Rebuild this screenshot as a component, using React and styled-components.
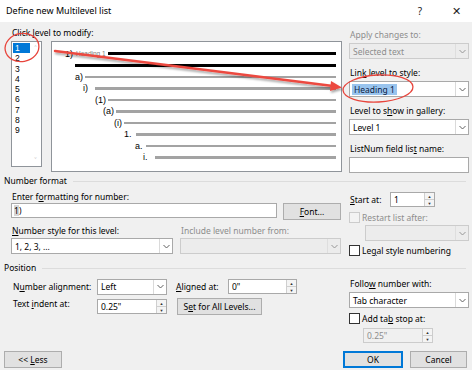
import styled, { createGlobalStyle } from "styled-components";

const GlobalStyle = createGlobalStyle`
    html, body {
        margin: 0;
        padding: 0;
        background: #f0f0f0;
    }
    body {
        font-family: "Noto Sans", "Open Sans", sans-serif;
        font-size: 8.5px;
        color: #000;
    }
`;

const levels = ["1", "2", "3", "4", "5", "6", "7", "8", "9"];

const previewRows = [
    { label: "a)", indent: 23, gap: 2 },
    { label: "i)", indent: 31, gap: 7 },
    { label: "(1)", indent: 43, gap: 2 },
    { label: "(a)", indent: 51, gap: 2 },
    { label: "(i)", indent: 62, gap: 2 },
    { label: "1.", indent: 72, gap: 4 },
    { label: "a.", indent: 83, gap: 3 },
    { label: "i.", indent: 91, gap: 7 },
];

const Chevron = () => (
    <svg width="7" height="5" viewBox="0 0 7 5">
        <path d="M0.5 1 L3.5 4 L6.5 1" fill="none" stroke="#606060" strokeWidth="1" />
    </svg>
);

const Select = ({ value, width, disabled, highlight }) => (
    <SelectBox $width={width} $disabled={disabled}>
        <SelectValue>{highlight ? <Highlight>{value}</Highlight> : value}</SelectValue>
        <SelectArrow $disabled={disabled}><Chevron /></SelectArrow>
    </SelectBox>
);

const Spin = ({ value, width, disabled }) => (
    <SpinBox $width={width} $disabled={disabled}>
        <SelectValue>{value}</SelectValue>
        <SpinButtons>
            <SpinHalf>▲</SpinHalf>
            <SpinHalf>▼</SpinHalf>
        </SpinButtons>
    </SpinBox>
);

const Check = ({ children, disabled }) => (
    <CheckRow $disabled={disabled}>
        <CheckBox $disabled={disabled} />
        <span>{children}</span>
    </CheckRow>
);

const Annotations = () => (
    <Overlay width="472" height="370" viewBox="0 0 472 370">
        <defs>
            <filter id="shadow" x="-10%" y="-50%" width="120%" height="200%">
                <feDropShadow dx="1" dy="2" stdDeviation="1.2" floodColor="#000" floodOpacity="0.35" />
            </filter>
        </defs>
        <g filter="url(#shadow)">
            <line x1="55" y1="51" x2="333" y2="86" stroke="#ec4a41" strokeWidth="2.5" strokeLinecap="round" />
            <polygon points="342,87.5 331,81 330,91" fill="#ec4a41" />
        </g>
        <ellipse cx="22" cy="47.5" rx="17" ry="14" fill="none" stroke="#e8453c" strokeWidth="1.3" transform="rotate(-10 22 47.5)" />
        <ellipse cx="378" cy="88.5" rx="35" ry="13.5" fill="none" stroke="#e8453c" strokeWidth="1.3" transform="rotate(-3 378 88.5)" />
    </Overlay>
);

export default function App() {
    return (
        <>
            <GlobalStyle />
            <Dialog>
                <TitleBar>
                    <Title>Define new Multilevel list</Title>
                    <TitleButtons>
                        <TitleButton>?</TitleButton>
                        <TitleButton $close>✕</TitleButton>
                    </TitleButtons>
                </TitleBar>

                <Body>
                    <TwoColumns>
                        <div>
                            <TopLabel>Click <Key>l</Key>evel to modify:</TopLabel>
                            <LevelRow>
                                <ListBox>
                                    <ListItems>
                                        {levels.map((level, i) => (
                                            <ListItem key={level} $selected={i === 0}>{level}</ListItem>
                                        ))}
                                    </ListItems>
                                    <ScrollBar>
                                        <ScrollArrow>˄</ScrollArrow>
                                        <ScrollArrow>˅</ScrollArrow>
                                    </ScrollBar>
                                </ListBox>
                                <Preview>
                                    <PreviewRow $indent={13}>
                                        <PreviewLabel>1)</PreviewLabel>
                                        <HeadingText>Heading 1</HeadingText>
                                        <PreviewLine $dark />
                                    </PreviewRow>
                                    <PreviewRow $indent={23}>
                                        <PreviewLine $dark />
                                    </PreviewRow>
                                    {previewRows.map((row) => (
                                        <PreviewRow key={row.label} $indent={row.indent}>
                                            <PreviewLabel $gap={row.gap}>{row.label}</PreviewLabel>
                                            <PreviewLine />
                                        </PreviewRow>
                                    ))}
                                </Preview>
                            </LevelRow>
                        </div>

                        <SideColumn $top={7}>
                            <Field>
                                <FieldLabel $disabled>Apply changes to:</FieldLabel>
                                <Select value="Selected text" disabled />
                            </Field>
                            <Field>
                                <FieldLabel>Lin<Key>k</Key> level to style:</FieldLabel>
                                <Select value="Heading 1" highlight />
                            </Field>
                            <Field>
                                <FieldLabel>Level to s<Key>h</Key>ow in gallery:</FieldLabel>
                                <Select value="Level 1" />
                            </Field>
                            <Field>
                                <FieldLabel>ListNum field lis<Key>t</Key> name:</FieldLabel>
                                <TextBox />
                            </Field>
                        </SideColumn>
                    </TwoColumns>

                    <GroupHeader $top={2}>
                        <span>Number format</span>
                        <GroupRule />
                    </GroupHeader>

                    <TwoColumns>
                        <GroupContent>
                            <FieldLabel $top={4}>Enter f<Key>o</Key>rmatting for number:</FieldLabel>
                            <FormatRow>
                                <TextBox $width={266}><Cursor>1</Cursor>)</TextBox>
                                <Button $width={58}><Key>F</Key>ont...</Button>
                            </FormatRow>
                            <StyleGrid>
                                <FieldLabel><Key>N</Key>umber style for this level:</FieldLabel>
                                <FieldLabel $disabled>Include level number from:</FieldLabel>
                                <Select value="1, 2, 3, ..." />
                                <Select value="" disabled />
                            </StyleGrid>
                        </GroupContent>

                        <SideColumn $top={5}>
                            <InlineField>
                                <InlineLabel $width={40}><Key>S</Key>tart at:</InlineLabel>
                                <Spin value="1" width={45} />
                            </InlineField>
                            <Spaced $top={5}>
                                <Check disabled>Restart list after:</Check>
                            </Spaced>
                            <Indented $left={16} $top={2}>
                                <Select value="" disabled />
                            </Indented>
                            <Spaced $top={4}>
                                <Check>Le<Key>g</Key>al style numbering</Check>
                            </Spaced>
                        </SideColumn>
                    </TwoColumns>

                    <GroupHeader $top={6}>
                        <span>Position</span>
                        <GroupRule />
                    </GroupHeader>

                    <TwoColumns>
                        <PositionGrid>
                            <InlineLabel>N<Key>u</Key>mber alignment:</InlineLabel>
                            <Select value="Left" width={70} />
                            <InlineLabel $indent={9}><Key>A</Key>ligned at:</InlineLabel>
                            <Spin value={'0"'} width={69} />
                            <InlineLabel $raise>Text <Key>i</Key>ndent at:</InlineLabel>
                            <Spin value={'0.25"'} width={70} />
                            <SpanButton>S<Key>e</Key>t for All Levels...</SpanButton>
                        </PositionGrid>

                        <SideColumn $top={4}>
                            <Field>
                                <FieldLabel>Follo<Key>w</Key> number with:</FieldLabel>
                                <Select value="Tab character" />
                            </Field>
                            <Spaced $top={5}>
                                <Check>Add ta<Key>b</Key> stop at:</Check>
                            </Spaced>
                            <Indented $left={14} $top={4}>
                                <Spin value={'0.25"'} width={70} disabled />
                            </Indented>
                        </SideColumn>
                    </TwoColumns>

                    <Footer>
                        <Button $width={58}>{"<< "}<Key>L</Key>ess</Button>
                        <FooterRight>
                            <Button $width={60} $default>OK</Button>
                            <Button $width={57}>Cancel</Button>
                        </FooterRight>
                    </Footer>
                </Body>
                <Annotations />
            </Dialog>
        </>
    );
}

const Dialog = styled.div`
    position: relative;
    width: 472px;
    height: 370px;
    overflow: hidden;
    background: #f0f0f0;
    display: flex;
    flex-direction: column;
`;

const TitleBar = styled.div`
    height: 22px;
    background: #fff;
    display: flex;
    align-items: center;
    justify-content: space-between;
    padding-left: 6px;
`;

const Title = styled.div`
    font-size: 9px;
    line-height: 12px;
`;

const TitleButtons = styled.div`
    display: flex;
    align-items: center;
`;

const TitleButton = styled.div`
    width: ${(p) => (p.$close ? "32px" : "40px")};
    text-align: center;
    font-size: ${(p) => (p.$close ? "11px" : "10px")};
    line-height: 22px;
    color: #222;
`;

const Body = styled.div`
    flex: 1;
    padding: 0 3px 0 4px;
    display: flex;
    flex-direction: column;
`;

const TwoColumns = styled.div`
    display: grid;
    grid-template-columns: 338px 120px;
    column-gap: 7px;
    align-items: start;
`;

const Key = styled.span`
    text-decoration: underline;
    text-underline-offset: 1px;
`;

const TopLabel = styled.div`
    margin: 5px 0 0 8px;
    line-height: 12px;
`;

const LevelRow = styled.div`
    display: flex;
    gap: 9px;
    margin: 2px 0 0 7px;
`;

const ListBox = styled.div`
    width: 31px;
    height: 126px;
    box-sizing: border-box;
    background: #fff;
    border: 1px solid #8f949a;
    display: flex;
`;

const ListItems = styled.div`
    flex: 1;
    padding: 1px 0 0 1px;
`;

const ListItem = styled.div`
    height: 10.3px;
    line-height: 10.3px;
    padding-left: 2px;
    width: 15px;
    font-family: "Liberation Sans", Arial, sans-serif;
    font-size: 8.5px;
    background: ${(p) => (p.$selected ? "#0078d7" : "transparent")};
    color: ${(p) => (p.$selected ? "#fff" : "#000")};
`;

const ScrollBar = styled.div`
    width: 11px;
    display: flex;
    flex-direction: column;
    justify-content: space-between;
    align-items: center;
    padding: 3px 0 1px;
`;

const ScrollArrow = styled.span`
    color: #c4c4c4;
    font-size: 9px;
    line-height: 8px;
`;

const Preview = styled.div`
    width: 291px;
    height: 131px;
    box-sizing: border-box;
    background: #fff;
    border: 1px solid #8f949a;
    padding: 6px 5px 0 0;
`;

const PreviewRow = styled.div`
    display: flex;
    align-items: center;
    height: 11.5px;
    padding-left: ${(p) => p.$indent}px;
`;

const PreviewLabel = styled.span`
    font-family: "Liberation Sans", Arial, sans-serif;
    font-size: 9px;
    line-height: 10px;
    margin-right: ${(p) => p.$gap ?? 3}px;
`;

const HeadingText = styled.span`
    font-family: "Liberation Sans", Arial, sans-serif;
    font-size: 6.5px;
    color: #7a7a7a;
    margin-right: 2px;
`;

const PreviewLine = styled.div`
    flex: 1;
    height: ${(p) => (p.$dark ? "3px" : "2.5px")};
    background: ${(p) => (p.$dark ? "#000" : "#a3a3a3")};
`;

const SideColumn = styled.div`
    display: flex;
    flex-direction: column;
    padding-top: ${(p) => p.$top ?? 0}px;
`;

const Field = styled.div`
    display: flex;
    flex-direction: column;
    gap: 2px;
    & + & {
        margin-top: 8px;
    }
`;

const FieldLabel = styled.div`
    line-height: 12px;
    padding-left: 1px;
    margin-top: ${(p) => p.$top ?? 0}px;
    color: ${(p) => (p.$disabled ? "#8d8d8d" : "#000")};
    white-space: nowrap;
`;

const SelectBox = styled.div`
    width: ${(p) => (p.$width ? `${p.$width}px` : "100%")};
    height: 16px;
    box-sizing: border-box;
    display: flex;
    align-items: stretch;
    background: ${(p) => (p.$disabled ? "#ececec" : "#fff")};
    border: 1px solid ${(p) => (p.$disabled ? "#cccccc" : "#a9a9a9")};
    color: ${(p) => (p.$disabled ? "#8d8d8d" : "#000")};
`;

const SelectValue = styled.div`
    flex: 1;
    display: flex;
    align-items: center;
    padding-left: 3px;
    white-space: nowrap;
    overflow: hidden;
`;

const Highlight = styled.span`
    background: #99c4ee;
    color: #0d1b3e;
    padding: 0 2px;
    margin-left: -1px;
    line-height: 11px;
`;

const SelectArrow = styled.div`
    width: 12px;
    display: flex;
    align-items: center;
    justify-content: center;
    border-left: 1px solid ${(p) => (p.$disabled ? "#d6d6d6" : "#dadada")};
    background: ${(p) => (p.$disabled ? "#ececec" : "#fff")};
    opacity: ${(p) => (p.$disabled ? 0.6 : 1)};
`;

const TextBox = styled.div`
    width: ${(p) => (p.$width ? `${p.$width}px` : "100%")};
    height: ${(p) => (p.$width ? 15 : 16)}px;
    box-sizing: border-box;
    background: #fff;
    border: 1px solid #a9a9a9;
    padding-left: 2px;
    line-height: 13px;
`;

const Cursor = styled.span`
    background: #d6d6d6;
`;

const Button = styled.div`
    width: ${(p) => p.$width}px;
    height: 17px;
    box-sizing: border-box;
    display: flex;
    align-items: center;
    justify-content: center;
    background: #e1e1e1;
    border: 1px solid ${(p) => (p.$default ? "#0078d7" : "#adadad")};
    box-shadow: ${(p) => (p.$default ? "inset 0 0 0 1px #0078d7" : "none")};
    white-space: pre;
`;

const GroupContent = styled.div`
    padding-left: 7px;
`;

const FormatRow = styled.div`
    display: flex;
    align-items: flex-start;
    gap: 6px;
`;

const StyleGrid = styled.div`
    display: grid;
    grid-template-columns: 162px 161px;
    column-gap: 7px;
    row-gap: 1px;
    margin-top: 5px;
`;

const GroupHeader = styled.div`
    display: flex;
    align-items: center;
    gap: 6px;
    margin-top: ${(p) => p.$top}px;
    line-height: 12px;
    padding-right: 3px;
`;

const GroupRule = styled.div`
    flex: 1;
    height: 1px;
    background: #dcdcdc;
`;

const InlineField = styled.div`
    display: flex;
    align-items: center;
`;

const InlineLabel = styled.div`
    width: ${(p) => (p.$width ? `${p.$width}px` : "auto")};
    padding-left: ${(p) => p.$indent ?? 1}px;
    line-height: 12px;
    white-space: nowrap;
    align-self: ${(p) => (p.$raise ? "start" : "center")};
`;

const SpinBox = styled(SelectBox)`
    height: 15px;
    background: ${(p) => (p.$disabled ? "#f0f0f0" : "#fff")};
    border-color: ${(p) => (p.$disabled ? "#cccccc" : "#a9a9a9")};
`;

const SpinButtons = styled.div`
    width: 9px;
    display: flex;
    flex-direction: column;
    border-left: 1px solid #cfcfcf;
    background: #f4f4f4;
`;

const SpinHalf = styled.div`
    flex: 1;
    display: flex;
    align-items: center;
    justify-content: center;
    font-size: 4px;
    color: #333;
    & + & {
        border-top: 1px solid #cfcfcf;
    }
`;

const CheckRow = styled.div`
    display: flex;
    align-items: center;
    gap: 2px;
    height: 11px;
    line-height: 11px;
    color: ${(p) => (p.$disabled ? "#8d8d8d" : "#000")};
    white-space: nowrap;
`;

const CheckBox = styled.div`
    width: 11px;
    height: 11px;
    box-sizing: border-box;
    border: 1px solid ${(p) => (p.$disabled ? "#cccccc" : "#333")};
    background: ${(p) => (p.$disabled ? "#f3f3f3" : "#fff")};
`;

const Spaced = styled.div`
    margin-top: ${(p) => p.$top}px;
`;

const Indented = styled.div`
    margin: ${(p) => p.$top}px 0 0 ${(p) => p.$left}px;
`;

const PositionGrid = styled.div`
    display: grid;
    grid-template-columns: 85px 70px 61px 69px;
    grid-template-rows: 17px 17px;
    row-gap: 3px;
    align-items: center;
    margin: 4px 0 0 8px;
`;

const SpanButton = styled(Button)`
    grid-column: 3 / span 2;
    width: 85px;
    margin-left: 10px;
`;

const Footer = styled.div`
    display: flex;
    justify-content: space-between;
    margin-top: 8px;
    padding-right: 2px;
`;

const FooterRight = styled.div`
    display: flex;
    gap: 7px;
`;

const Overlay = styled.svg`
    position: absolute;
    inset: 0;
    pointer-events: none;
`;
